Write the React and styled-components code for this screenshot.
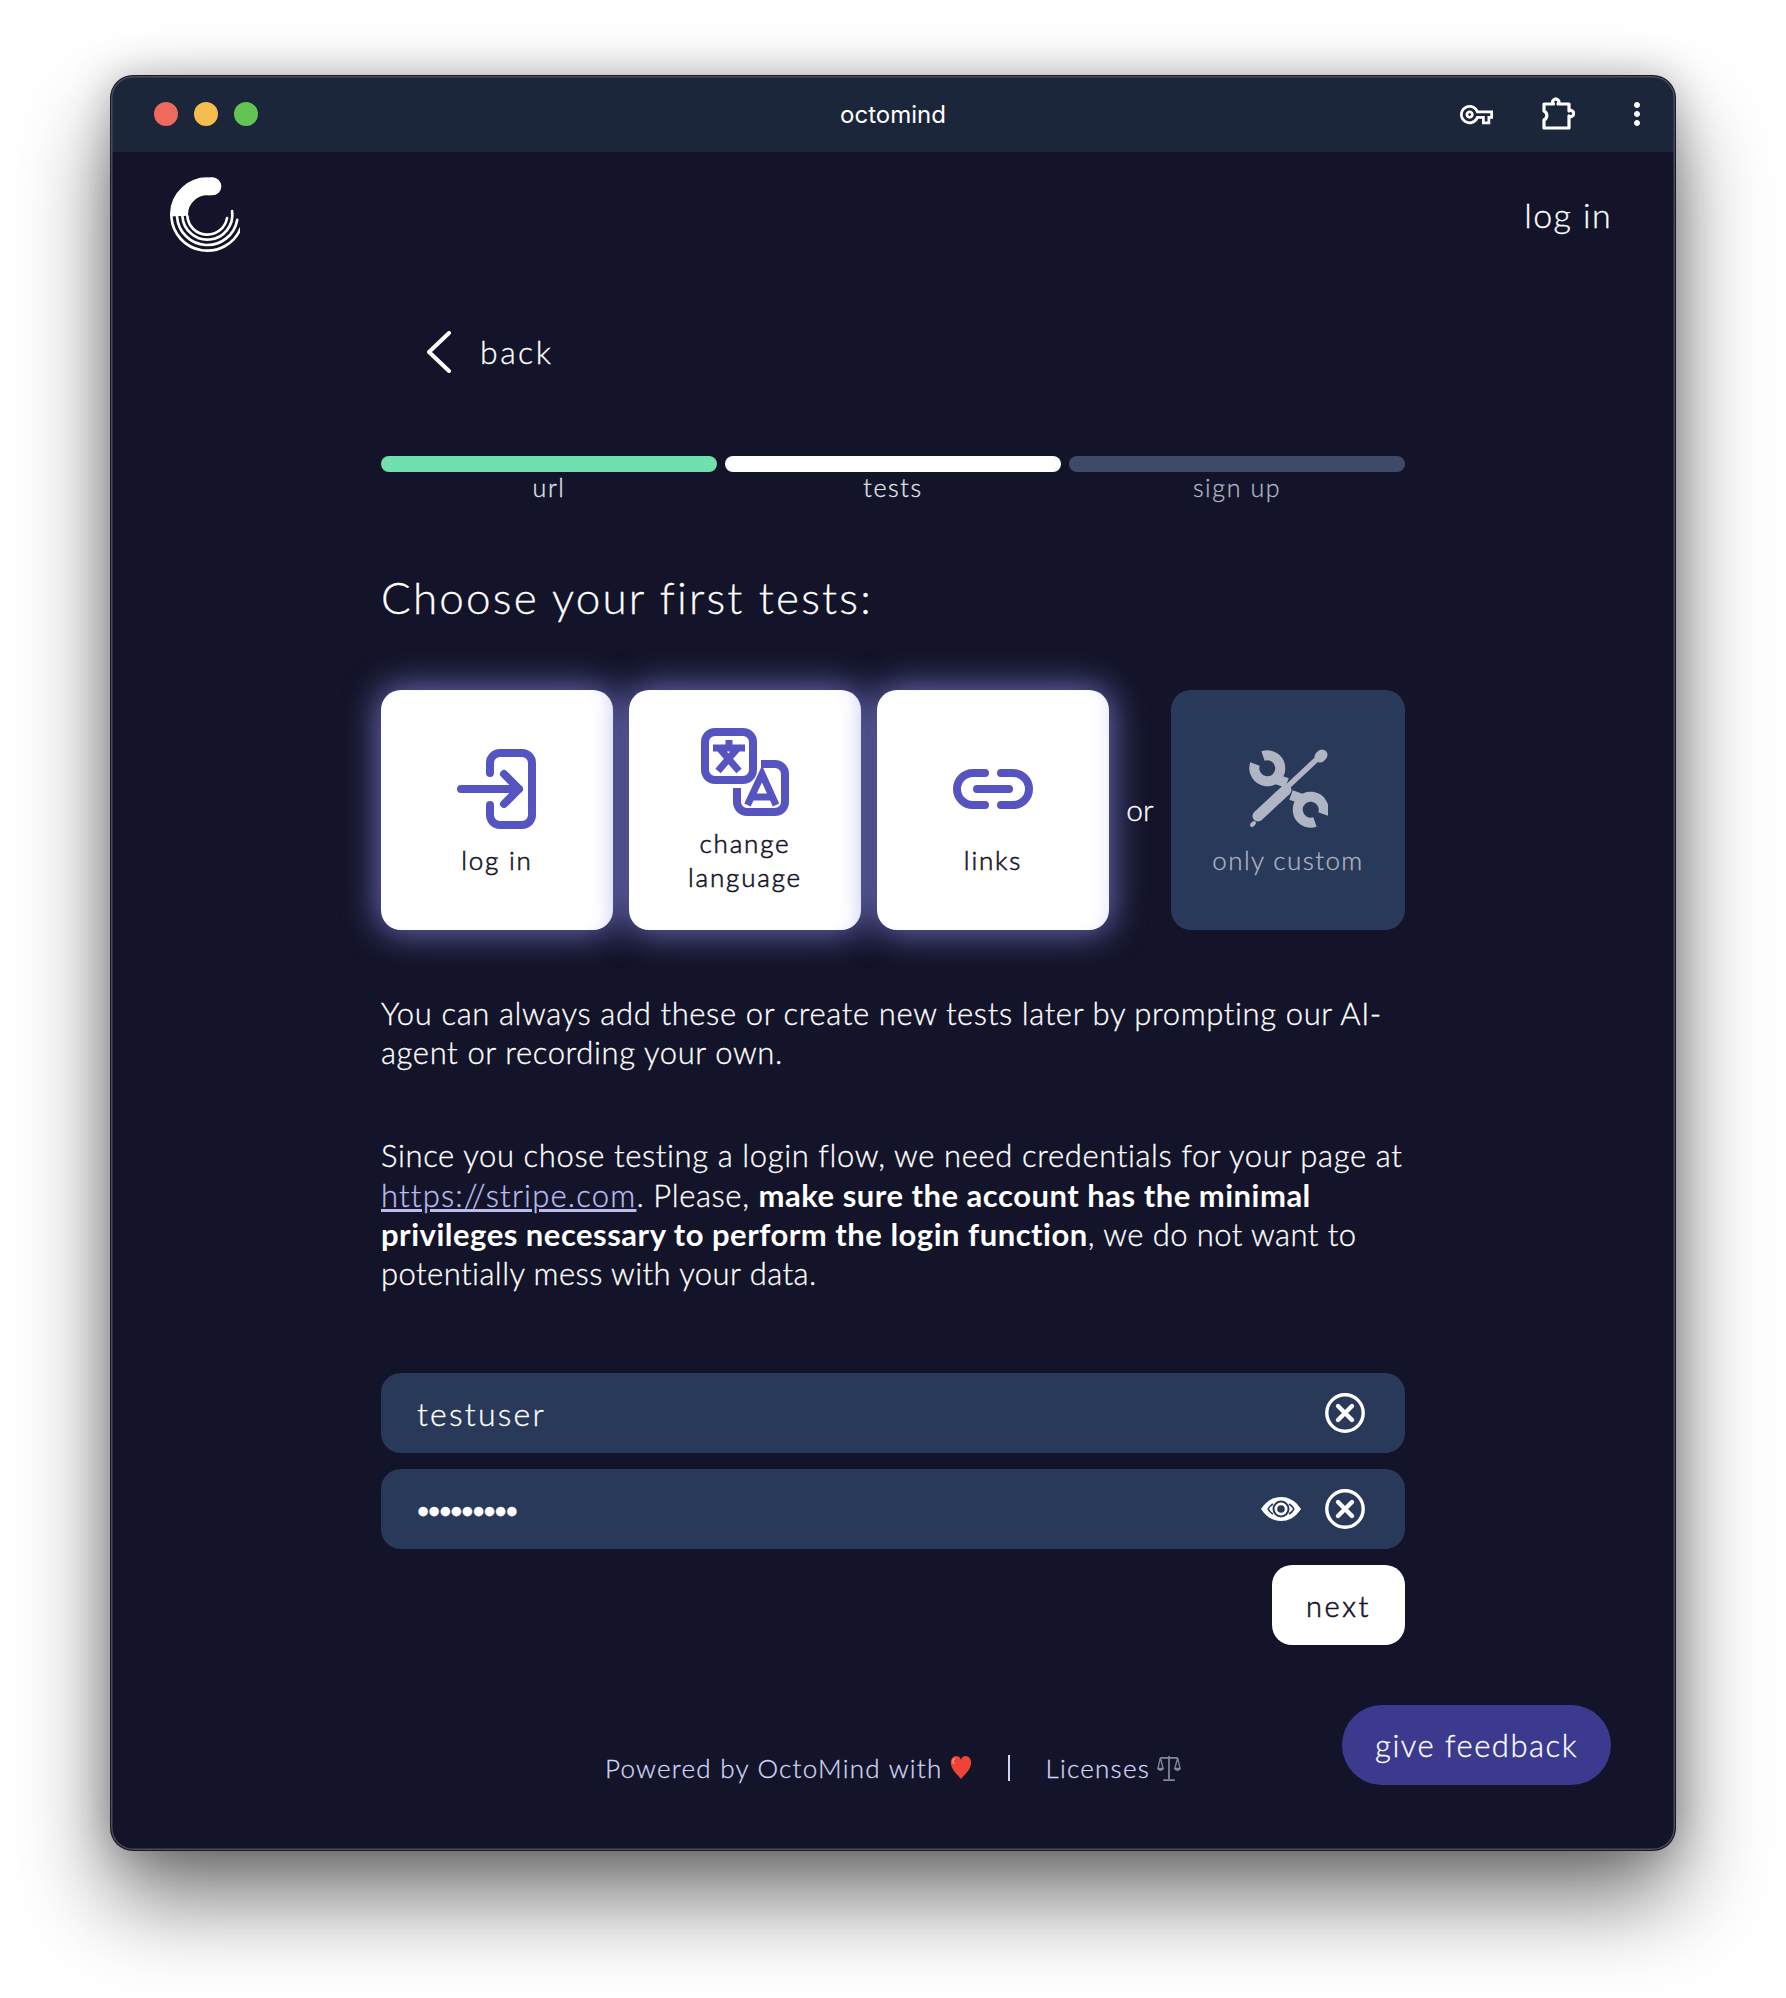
import React from 'react';
import styled, { createGlobalStyle, css } from 'styled-components';
import { MdOutlineVpnKey, MdMoreVert } from 'react-icons/md';

const Global = createGlobalStyle`
	html, body {
		margin: 0;
		background: #fff;
	}
	body {
		font-family: Lato, "Open Sans", sans-serif;
		min-height: 1998px;
		overflow: hidden;
	}
`;

const purple = '#5554c1';
const field = '#29395a';
const muted = '#b0b5c4';

// Lato light reads a little too thin next to the original typeface
const lightText = css`
	font-weight: 300;
	-webkit-text-stroke: 0.3px currentColor;
`;

const polar = (r, deg) => {
	const a = (deg * Math.PI) / 180;
	return [112 + r * Math.cos(a), 113 + r * Math.sin(a)];
};

const arc = (r, from, to) => {
	const [x1, y1] = polar(r, from);
	const [x2, y2] = polar(r, to);
	return `M${x1} ${y1} A${r} ${r} 0 ${Math.abs(to - from) > 180 ? 1 : 0} 0 ${x2} ${y2}`;
};

const Logo = () => (
	<svg width="70" height="76" viewBox="0 0 210 228" fill="none" stroke="#fff" strokeLinecap="round">
		<path d={arc(85, -81, -183)} strokeWidth="54" strokeLinecap="butt" />
		<path d="M125 28 l2 0" strokeWidth="54" />
		<path d={arc(60, 176, 10)} strokeWidth="8" />
		<path d={arc(75, 176, -8)} strokeWidth="8" />
		<path d={arc(91, 176, 10)} strokeWidth="8" />
		<path d={arc(108, 176, 22)} strokeWidth="8" />
	</svg>
);

const PuzzleIcon = () => (
	<svg width="34" height="34" viewBox="0 0 34 34" fill="none" stroke="#fff" strokeWidth="3.2" strokeLinejoin="round">
		<path d="M3 7 H12.5 A3 3 0 1 1 17 7 H28 V14 A3 3 0 1 1 28 19 V31 H3 V23 A5 5 0 0 0 3 14 Z" />
	</svg>
);

const LoginIcon = () => (
	<svg width="80" height="80" viewBox="0 0 80 80" fill="none" stroke={purple} strokeWidth="8" strokeLinecap="round" strokeLinejoin="round">
		<path d="M33 24 V14 a10 10 0 0 1 10-10 H65 a10 10 0 0 1 10 10 V66 a10 10 0 0 1-10 10 H43 a10 10 0 0 1-10-10 V56" />
		<path d="M4 40 H62 M47 25 L62 40 L47 55" />
	</svg>
);

const TranslateIcon = () => (
	<svg width="88" height="88" viewBox="0 0 88 88" fill="none" stroke={purple} strokeWidth="8">
		<rect x="4" y="4" width="48" height="48" rx="10" />
		<path d="M60 36 H74 a10 10 0 0 1 10 10 V74 a10 10 0 0 1-10 10 H46 a10 10 0 0 1-10-10 V60" />
		<path d="M12 20 H44 M28 12 V20 M19 21 L38 43 M36 21 L17 43" strokeWidth="7" />
		<path d="M46.5 77 L61 46 L75 77 M51 69 H71" strokeWidth="7" />
	</svg>
);

const LinkIcon = () => (
	<svg width="80" height="40" viewBox="0 0 80 40" fill="none" stroke={purple} strokeWidth="8" strokeLinecap="round">
		<path d="M32 4 H20 a16 16 0 0 0 0 32 H32" />
		<path d="M48 4 H60 a16 16 0 0 1 0 32 H48" />
		<path d="M24 20 H56" />
	</svg>
);

const ToolsIcon = () => (
	<svg width="80" height="80" viewBox="-2 0 80 80" fill="none" stroke={muted} strokeLinecap="round">
		<path d="M8 67 L36 41" strokeWidth="11" />
		<path d="M35 40 L66 11" strokeWidth="5.5" />
		<path d="M70 8 L72 6" strokeWidth="11" />
		<path d="M2 76 L4 74" strokeWidth="4" />
		<path d="M13 7 A13 13 0 1 1 5 15 M26 30 L37 34" strokeWidth="10" strokeLinecap="butt" />
		<path d="M13 7 A13 13 0 1 1 5 15 M26 30 L37 34" strokeWidth="10" strokeLinecap="butt" transform="rotate(180 39 40)" />
	</svg>
);

const EyeIcon = () => (
	<svg width="40" height="24" viewBox="0 0 40 24">
		<path d="M0 12 C6 3 13 0 20 0 C27 0 34 3 40 12 C34 21 27 24 20 24 C13 24 6 21 0 12 Z" fill="#fff" />
		<path d="M7 12 C9 9 10 8 12 7 M7 12 C9 15 10 16 12 17 M33 12 C31 9 30 8 28 7 M33 12 C31 15 30 16 28 17" stroke={field} strokeWidth="1.6" fill="none" />
		<circle cx="20" cy="12" r="8.5" fill={field} />
		<circle cx="20" cy="12" r="6.5" fill="#fff" />
		<circle cx="20" cy="12" r="3.8" fill={field} />
	</svg>
);

const ClearIcon = () => (
	<svg width="40" height="40" viewBox="0 0 40 40" fill="none" stroke="#fff" strokeLinecap="round">
		<circle cx="20" cy="20" r="18.2" strokeWidth="3.4" />
		<path d="M13 13 L27 27 M27 13 L13 27" strokeWidth="4.4" />
	</svg>
);

const Heart = () => (
	<svg width="22" height="24" viewBox="0 0 22 26">
		<path d="M11 25 C6 19 0 14 0 7 C0 3 3 0 6 0 C8 0 10 1 11 4 C12 1 14 0 16 0 C19 0 22 3 22 7 C22 14 16 19 11 25 Z" fill="#ef4435" />
		<path d="M4 3 C2.5 4 2 6 3 8" stroke="#f9a497" strokeWidth="1.4" fill="none" strokeLinecap="round" />
	</svg>
);

const Scales = () => (
	<svg width="24" height="27" viewBox="0 0 24 28" fill="none" stroke="#85889a" strokeWidth="1.4">
		<path d="M12 1 V25 M6 26 H18 M3 3 H21" strokeWidth="1.8" />
		<path d="M3 3 L0.5 14 H6 Z M21 3 L18 14 H23.5 Z" />
		<path d="M0.5 14 a3 3 0 0 0 5.5 0 M18 14 a3 3 0 0 0 5.5 0" fill="#85889a" />
	</svg>
);

const cards = [
	{ label: 'log in', icon: <LoginIcon /> },
	{ label: 'change language', icon: <TranslateIcon />, tall: true },
	{ label: 'links', icon: <LinkIcon /> },
];

const steps = [
	{ label: 'url', bar: '#6fe0ae', text: '#e3e4ea' },
	{ label: 'tests', bar: '#ffffff', text: '#e3e4ea' },
	{ label: 'sign up', bar: '#3e4a68', text: muted },
];

export default function App() {
	return (
		<>
			<Global />
			<Window>
				<TitleBar>
					<Lights>
						<Light color="#ee6a5f" />
						<Light color="#f5bd4f" />
						<Light color="#61c454" />
					</Lights>
					<Title>octomind</Title>
					<Tools>
						<KeyTool><MdOutlineVpnKey size={33} /></KeyTool>
						<PuzzleTool><PuzzleIcon /></PuzzleTool>
						<MoreTool><MdMoreVert size={36} /></MoreTool>
					</Tools>
				</TitleBar>
				<Header>
					<Logo />
					<HeaderLink>log in</HeaderLink>
				</Header>
				<Main>
					<Back>
						<svg width="24" height="42" viewBox="0 0 24 42" fill="none" stroke="#fff" strokeWidth="4" strokeLinecap="round" strokeLinejoin="round">
							<path d="M22 2 L2 21 L22 40" />
						</svg>
						<BackLabel>back</BackLabel>
					</Back>
					<Steps>
						{steps.map(step => (
							<Step key={step.label}>
								<Bar color={step.bar} />
								<StepLabel color={step.text}>{step.label}</StepLabel>
							</Step>
						))}
					</Steps>
					<Heading>Choose your first tests:</Heading>
					<CardRow>
						{cards.map(card => (
							<Card key={card.label} $tall={card.tall}>
								<IconBox $tall={card.tall}>{card.icon}</IconBox>
								<CardLabel $tall={card.tall}>{card.label}</CardLabel>
							</Card>
						))}
						<Or>or</Or>
						<CustomCard>
							<IconBox><ToolsIcon /></IconBox>
							<CardLabel $muted>only custom</CardLabel>
						</CustomCard>
					</CardRow>
					<Hint>You can always add these or create new tests later by prompting our AI-agent or recording your own.</Hint>
					<Notice>
						Since you chose testing a login flow, we need credentials for your page at{' '}
						<StripeLink>https://stripe.com</StripeLink>. Please,{' '}
						<strong>make sure the account has the minimal privileges necessary to perform the login function</strong>
						<Trailing>, we do not want to potentially mess with your data.</Trailing>
					</Notice>
					<Fields>
						<Field>
							<FieldInput defaultValue="testuser" />
							<ClearIcon />
						</Field>
						<Field>
							<PasswordInput type="password" defaultValue="testuser1" />
							<EyeIcon />
							<ClearIcon />
						</Field>
					</Fields>
					<Actions>
						<NextButton>next</NextButton>
					</Actions>
					<Footer>
						<FooterGroup>Powered by OctoMind with <Heart /></FooterGroup>
						<Pipe />
						<FooterGroup>Licenses <Scales /></FooterGroup>
					</Footer>
				</Main>
				<Feedback>give feedback</Feedback>
			</Window>
		</>
	);
}

const Window = styled.div`
	background: #131429;
	border-radius: 22px;
	box-shadow: 0 0 0 1px #1a1a22, 0 48px 90px rgba(0, 0, 0, 0.55), 0 0 40px rgba(0, 0, 0, 0.25);
	height: 1774px;
	margin: 76px 0 0 111px;
	overflow: hidden;
	position: relative;
	width: 1564px;

	&::after {
		border-radius: 22px;
		box-shadow: inset 0 0 0 1.5px #4a4c5c;
		content: '';
		inset: 0;
		pointer-events: none;
		position: absolute;
	}
`;

const TitleBar = styled.div`
	align-items: center;
	background: #1c263b;
	display: flex;
	height: 76px;
	position: relative;
`;

const Lights = styled.div`
	display: flex;
	gap: 16px;
	margin-left: 43px;
`;

const Light = styled.span`
	background: ${props => props.color};
	border-radius: 50%;
	height: 24px;
	width: 24px;
`;

const Title = styled.div`
	color: #fff;
	font-family: Inter, sans-serif;
	font-size: 24px;
	font-weight: 400;
	left: 0;
	position: absolute;
	right: 0;
	text-align: center;
`;

const Tools = styled.div`
	align-items: center;
	color: #fff;
	display: flex;
	margin-left: auto;
`;

const KeyTool = styled.span`
	display: flex;
	margin-right: 48px;
`;

const PuzzleTool = styled.span`
	display: flex;
	margin-right: 44px;
`;

const MoreTool = styled.span`
	display: flex;
	margin-right: 20px;
`;

const Header = styled.header`
	align-items: center;
	display: flex;
	justify-content: space-between;
	padding: 25px 63px 0 59px;
`;

const HeaderLink = styled.a`
	${lightText}
	color: #fff;
	font-size: 34px;
	letter-spacing: 1.4px;
	padding-bottom: 2px;
`;

const Main = styled.main`
	display: flex;
	flex-direction: column;
	margin: 0 auto;
	width: 1024px;
`;

const Back = styled.div`
	align-items: center;
	display: flex;
	gap: 29px;
	height: 40px;
	margin: 79px 0 0 46px;
`;

const BackLabel = styled.span`
	${lightText}
	color: #fff;
	font-size: 32px;
	letter-spacing: 2.5px;
	padding-bottom: 2px;
`;

const Steps = styled.div`
	display: grid;
	gap: 8px;
	grid-template-columns: repeat(3, 1fr);
	margin-top: 84px;
`;

const Step = styled.div`
	display: flex;
	flex-direction: column;
`;

const Bar = styled.div`
	background: ${props => props.color};
	border-radius: 8px;
	height: 16px;
`;

const StepLabel = styled.div`
	${lightText}
	color: ${props => props.color};
	font-size: 25px;
	letter-spacing: 1.6px;
	line-height: 30px;
	padding-bottom: 4px;
	text-align: center;
`;

const Heading = styled.h1`
	${lightText}
	color: #fff;
	font-size: 44px;
	letter-spacing: 2.2px;
	line-height: 60px;
	margin: 61px 0 0;
`;

const CardRow = styled.div`
	display: flex;
	gap: 16px;
	margin-top: 63px;
`;

const Card = styled.div`
	align-items: center;
	background: #fff;
	border-radius: 20px;
	box-shadow: 0 0 34px 3px rgba(142, 142, 240, 0.72), inset -12px 0 18px -14px rgba(130, 130, 230, 0.3);
	box-sizing: border-box;
	display: flex;
	flex-direction: column;
	height: 240px;
	padding-top: ${props => (props.$tall ? '38px' : '59px')};
	width: 232px;
`;

const CustomCard = styled.div`
	align-items: center;
	background: ${field};
	border-radius: 20px;
	box-sizing: border-box;
	display: flex;
	flex-direction: column;
	height: 240px;
	margin-left: -16px;
	padding-top: 59px;
	width: 234px;
`;

const IconBox = styled.div`
	align-items: center;
	display: flex;
	height: ${props => (props.$tall ? '88px' : '80px')};
	justify-content: center;
`;

const CardLabel = styled.div`
	${lightText}
	-webkit-text-stroke: ${props => (props.$muted ? '0.3px' : '0.6px')} currentColor;
	color: ${props => (props.$muted ? muted : '#131429')};
	font-size: 26px;
	letter-spacing: ${props => (props.$muted ? '1.4px' : '1.8px')};
	line-height: 34px;
	margin-top: ${props => (props.$tall ? '10px' : '14px')};
	text-align: center;
	width: ${props => (props.$tall ? '150px' : '200px')};
`;

const Or = styled.div`
	${lightText}
	align-items: center;
	color: #fff;
	display: flex;
	font-size: 30px;
	justify-content: center;
	margin-left: -16px;
	padding-bottom: 2px;
	width: 62px;
`;

const Hint = styled.p`
	${lightText}
	color: #fff;
	font-size: 31px;
	letter-spacing: 0.62px;
	line-height: 39.2px;
	margin: 64px 0 0;
`;

const Notice = styled(Hint)`
	margin-top: 64px;

	strong {
		font-weight: 700;
		letter-spacing: 0.5px;
		-webkit-text-stroke: 0;
	}
`;

const Trailing = styled.span`
	letter-spacing: 0.45px;
`;

const StripeLink = styled.a`
	color: #bcbcec;
	letter-spacing: 1.2px;
	text-decoration: underline;
`;

const Fields = styled.div`
	display: flex;
	flex-direction: column;
	gap: 16px;
	margin-top: 80px;
`;

const Field = styled.div`
	align-items: center;
	background: ${field};
	border-radius: 20px;
	display: flex;
	gap: 24px;
	height: 80px;
	padding: 0 40px 0 36px;
`;

const FieldInput = styled.input`
	${lightText}
	background: transparent;
	border: 0;
	color: #fff;
	flex: 1;
	font-family: Lato, sans-serif;
	font-size: 32px;
	letter-spacing: 2.2px;
	min-width: 0;
	outline: 0;
	padding: 0;
`;

const PasswordInput = styled(FieldInput)`
	font-size: 21px;
	font-weight: 700;
	letter-spacing: -1.1px;
`;

const Actions = styled.div`
	display: flex;
	justify-content: flex-end;
	margin-top: 16px;
`;

const NextButton = styled.button`
	${lightText}
	-webkit-text-stroke: 0.6px currentColor;
	background: #fff;
	border: 0;
	border-radius: 20px;
	color: #131429;
	font-family: Lato, sans-serif;
	font-size: 29px;
	height: 80px;
	letter-spacing: 2.6px;
	padding: 0;
	width: 133px;
`;

const Footer = styled.footer`
	${lightText}
	align-items: center;
	color: #d4d4f6;
	display: flex;
	font-size: 26px;
	gap: 36px;
	height: 40px;
	justify-content: center;
	letter-spacing: 1.25px;
	margin-top: 103px;
`;

const FooterGroup = styled.span`
	align-items: center;
	display: flex;
	gap: 7px;
`;

const Pipe = styled.span`
	background: #d4d4f6;
	height: 26px;
	width: 2px;
`;

const Feedback = styled.button`
	${lightText}
	background: #3b3a8f;
	border: 0;
	border-radius: 40px;
	bottom: 65px;
	color: #fff;
	font-family: Lato, sans-serif;
	font-size: 31px;
	height: 80px;
	letter-spacing: 1.5px;
	padding: 0;
	position: absolute;
	right: 64px;
	width: 269px;
`;
